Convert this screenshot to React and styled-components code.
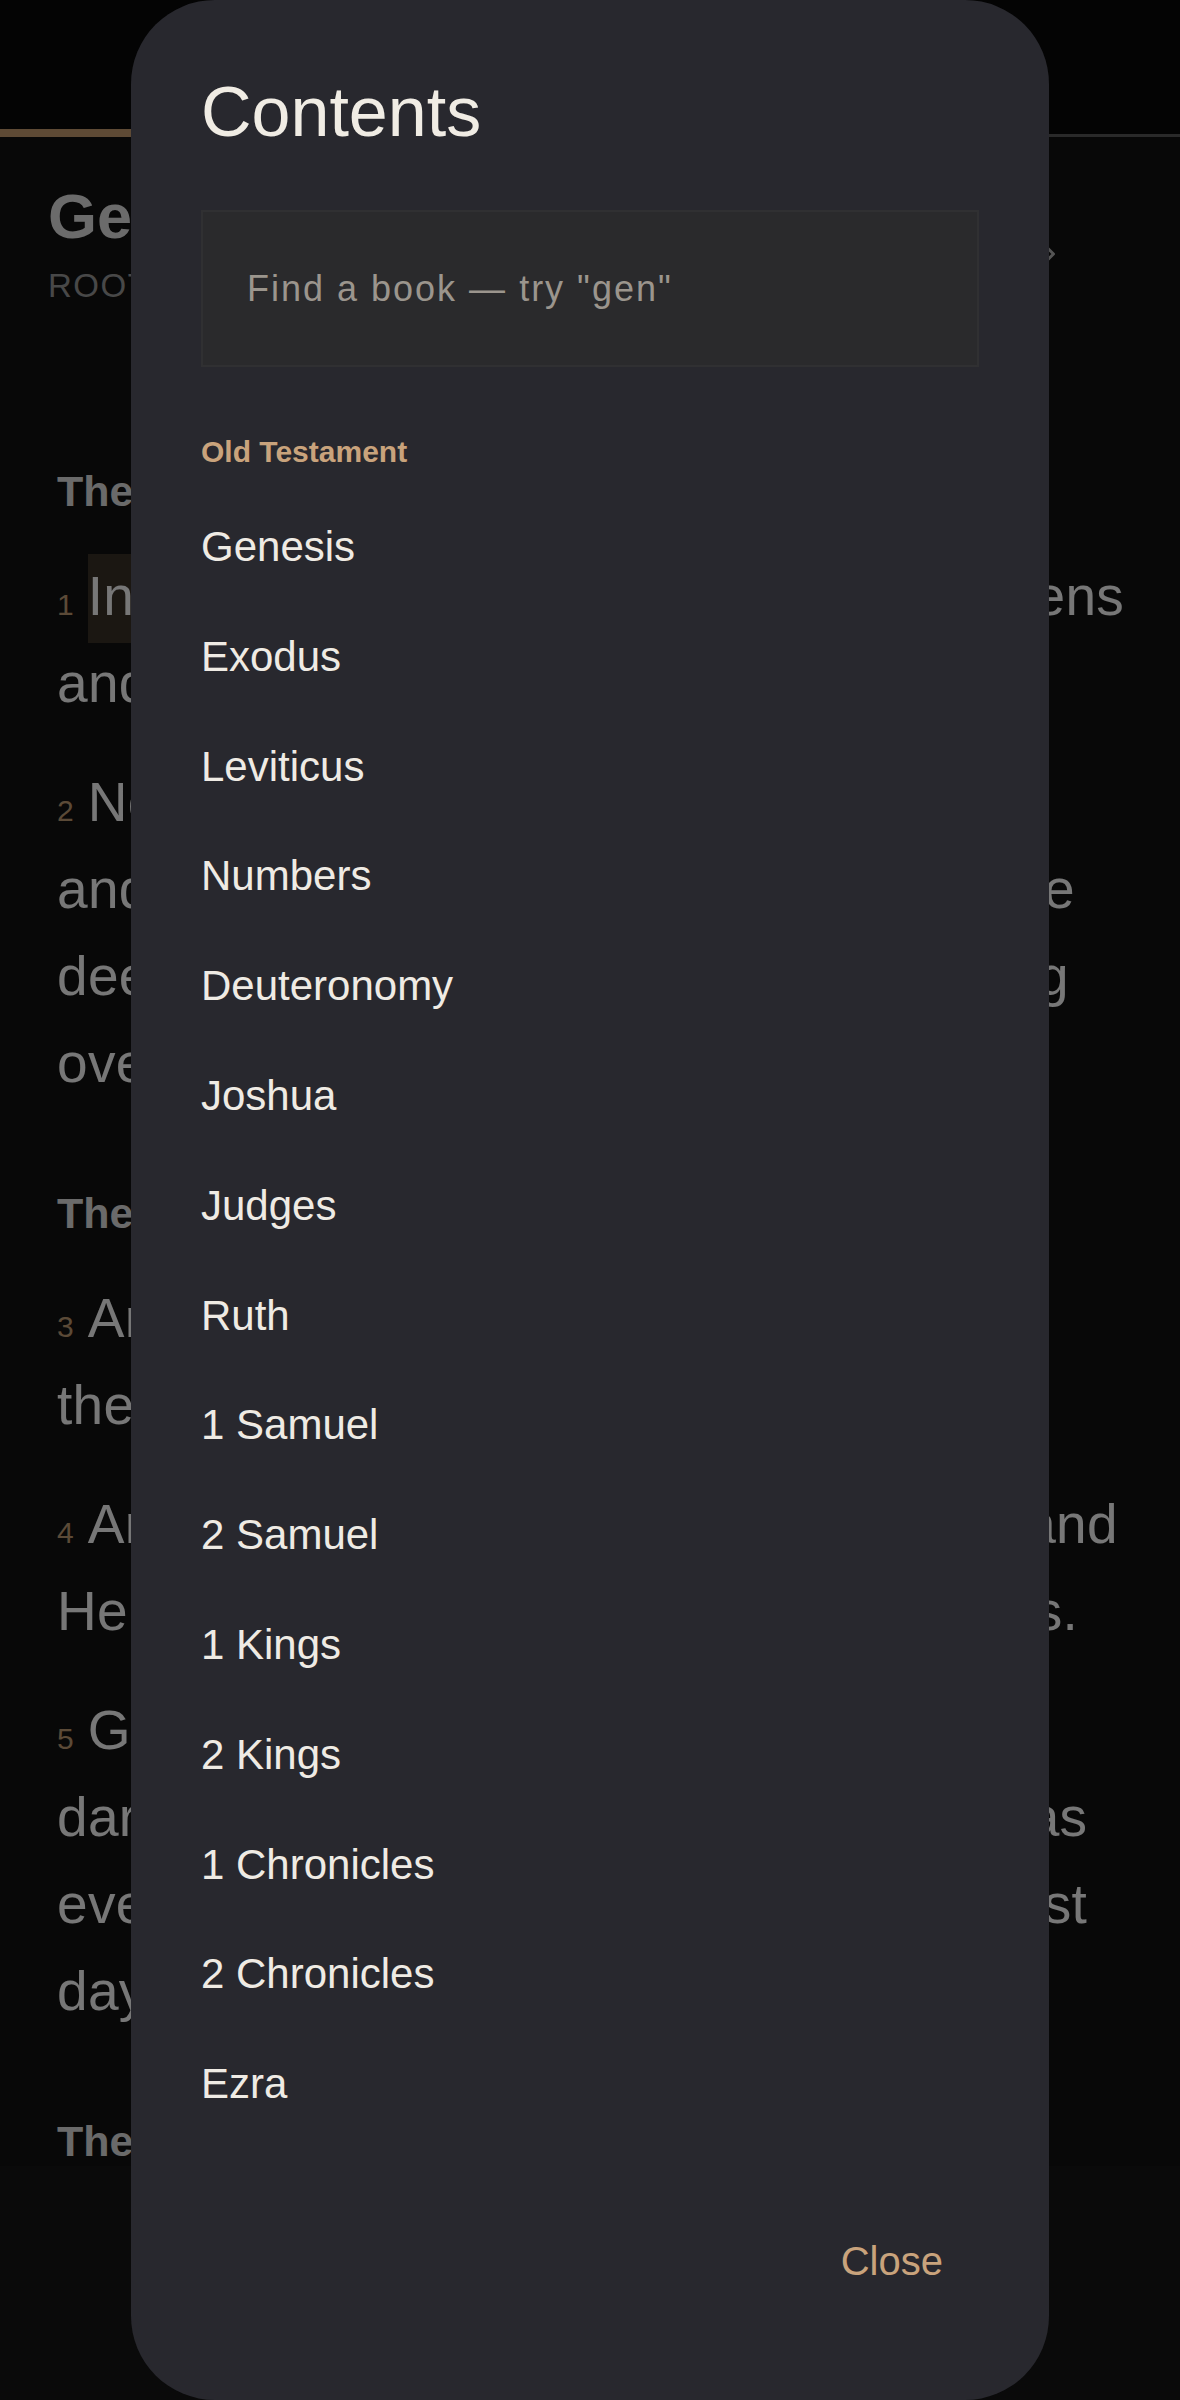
import React from 'react'
import styled, { createGlobalStyle } from 'styled-components'

const GlobalStyle = createGlobalStyle`
  html, body {
    margin: 0;
    padding: 0;
    background: #050505;
  }
  * {
    box-sizing: border-box;
  }
`;

const BOOKS = [
  'Genesis', 'Exodus', 'Leviticus', 'Numbers', 'Deuteronomy', 'Joshua', 'Judges', 'Ruth',
  '1 Samuel', '2 Samuel', '1 Kings', '2 Kings', '1 Chronicles', '2 Chronicles', 'Ezra',
  'Nehemiah', 'Esther', 'Job'
];

function App() {
  return (
    <Screen>
      <GlobalStyle />
      <Reader>
        <Header>
          <HeaderTitle>Genesis 1</HeaderTitle>
          <Progress />
        </Header>
        <TitleSection>
          <div>
            <BookTitle>Genesis</BookTitle>
            <BookSub>Roots of everything</BookSub>
          </div>
          <ChapterButton>
            <svg width="36" height="36" viewBox="0 0 36 36" fill="none" stroke="currentColor" strokeWidth="3" strokeLinecap="round" strokeLinejoin="round">
              <path d="M13.5 9 L22.5 18 L13.5 27" />
            </svg>
          </ChapterButton>
        </TitleSection>
        <Article>
          <Heading>The Creation</Heading>
          <Verse>
            <Line><Num>1</Num><Mark>In the beginning</Mark> God created the heavens</Line>
            <Line>and the earth.</Line>
          </Verse>
          <Verse>
            <Line><Num>2</Num>Now the earth was formless and void,</Line>
            <Line>and darkness was over the surface of the</Line>
            <Line>deep. And the Spirit of God was hovering</Line>
            <Line>over the surface of the waters.</Line>
          </Verse>
          <Heading>The First Day</Heading>
          <Verse>
            <Line><Num>3</Num>And God said, “Let there be light,” and</Line>
            <Line>there was light.</Line>
          </Verse>
          <Verse>
            <Line><Num>4</Num>And God saw that the light was good, and</Line>
            <Line>He separated the light from the darkness.</Line>
          </Verse>
          <Verse>
            <Line><Num>5</Num>God called the light “day,” and the</Line>
            <Line>darkness He called “night.” And there was</Line>
            <Line>evening, and there was morning—the first</Line>
            <Line>day.</Line>
          </Verse>
          <Heading>The Second Day</Heading>
        </Article>
        <BottomBar />
      </Reader>

      <Backdrop />

      <Dialog>
        <DialogTitle>Contents</DialogTitle>
        <SearchInput type="text" placeholder={'Find a book — try "gen"'} />
        <BookList>
          <SectionLabel>Old Testament</SectionLabel>
          {BOOKS.map((b) => (
            <BookItem key={b}>{b}</BookItem>
          ))}
        </BookList>
        <DialogFooter>
          <CloseButton>Close</CloseButton>
        </DialogFooter>
      </Dialog>
    </Screen>
  )
}

export default App

const Screen = styled.div`
  position: relative;
  width: 1180px;
  height: 2400px;
  overflow: hidden;
  background: #101010;
  font-family: "Liberation Sans", Arial, sans-serif;
`;

const Reader = styled.div`
  height: 100%;
  display: flex;
  flex-direction: column;
`;

const Header = styled.header`
  position: relative;
  height: 137px;
  flex-shrink: 0;
  background: #080808;
  border-bottom: 3px solid #545454;
  display: flex;
  align-items: center;
  justify-content: center;
`;

const HeaderTitle = styled.span`
  color: #d6d6d6;
  font-size: 40px;
  font-weight: 700;
`;

const Progress = styled.div`
  position: absolute;
  left: 0;
  bottom: -3px;
  height: 8px;
  width: 36%;
  background: #bc946a;
`;

const TitleSection = styled.section`
  display: flex;
  justify-content: space-between;
  align-items: center;
  padding: 41px 48px 0;
`;

const BookTitle = styled.h1`
  margin: 0;
  font-size: 63px;
  line-height: 76px;
  font-weight: 700;
  color: #d6d6d6;
`;

const BookSub = styled.div`
  margin-top: 12px;
  font-size: 33px;
  line-height: 40px;
  letter-spacing: 1.5px;
  text-transform: uppercase;
  color: #909090;
`;

const ChapterButton = styled.div`
  display: flex;
  margin: 23px 65px 0 0;
  color: #a8a8a8;
`;

const Article = styled.article`
  padding: 79px 57px 0;
`;

const Heading = styled.h2`
  margin: 76px 0 32px;
  font-size: 43px;
  line-height: 60px;
  font-weight: 700;
  color: #d4d4d4;
`;

const Verse = styled.p`
  margin: 0 0 32px;
  font-size: 55px;
  line-height: 87px;
  letter-spacing: 0.3px;
  color: #eeeeee;
`;

const Line = styled.span`
  display: block;
  white-space: nowrap;
`;

const Num = styled.span`
  font-size: 30px;
  line-height: 0;
  letter-spacing: 0;
  color: #b6946e;
  margin-right: 14px;
`;

const Mark = styled.span`
  background: #362e24;
  padding: 11px 0 16px;
`;

const BottomBar = styled.div`
  position: absolute;
  left: 0;
  right: 0;
  bottom: 0;
  height: 234px;
  background: #141414;
`;

const Backdrop = styled.div`
  position: absolute;
  inset: 0;
  background: rgba(0, 0, 0, 0.5);
`;

const Dialog = styled.div`
  position: absolute;
  top: 0;
  left: 131px;
  width: 918px;
  height: 2400px;
  border-radius: 84px;
  background: #28282e;
  padding: 70px 70px 91px;
  display: flex;
  flex-direction: column;
`;

const DialogTitle = styled.h2`
  margin: 0;
  font-size: 70px;
  line-height: 84px;
  font-weight: 400;
  color: #f0ece4;
`;

const SearchInput = styled.input`
  margin-top: 56px;
  height: 157px;
  width: 100%;
  flex-shrink: 0;
  padding: 0 44px;
  background: #2a2a2c;
  border: 2px solid #303032;
  border-radius: 0;
  outline: none;
  font-family: "Liberation Sans", Arial, sans-serif;
  font-size: 36px;
  letter-spacing: 2px;
  color: #f0ece4;

  &::placeholder {
    color: #9b958d;
  }
`;

const BookList = styled.nav`
  flex: 1 1 0;
  min-height: 0;
  overflow: hidden;
  display: flex;
  flex-direction: column;
`;

const SectionLabel = styled.div`
  margin: 67px 0 22px;
  font-size: 30px;
  line-height: 36px;
  font-weight: 700;
  color: #c9a37c;
  flex-shrink: 0;
`;

const BookItem = styled.div`
  flex-shrink: 0;
  height: 109.8px;
  font-size: 42px;
  line-height: 109.8px;
  color: #efebe4;
`;

const DialogFooter = styled.div`
  display: flex;
  justify-content: flex-end;
  padding-top: 50px;
  flex-shrink: 0;
`;

const CloseButton = styled.button`
  padding: 24px 36px;
  background: transparent;
  border: none;
  font-family: "Liberation Sans", Arial, sans-serif;
  font-size: 40px;
  line-height: 48px;
  color: #c9a37c;
  cursor: pointer;
`;
